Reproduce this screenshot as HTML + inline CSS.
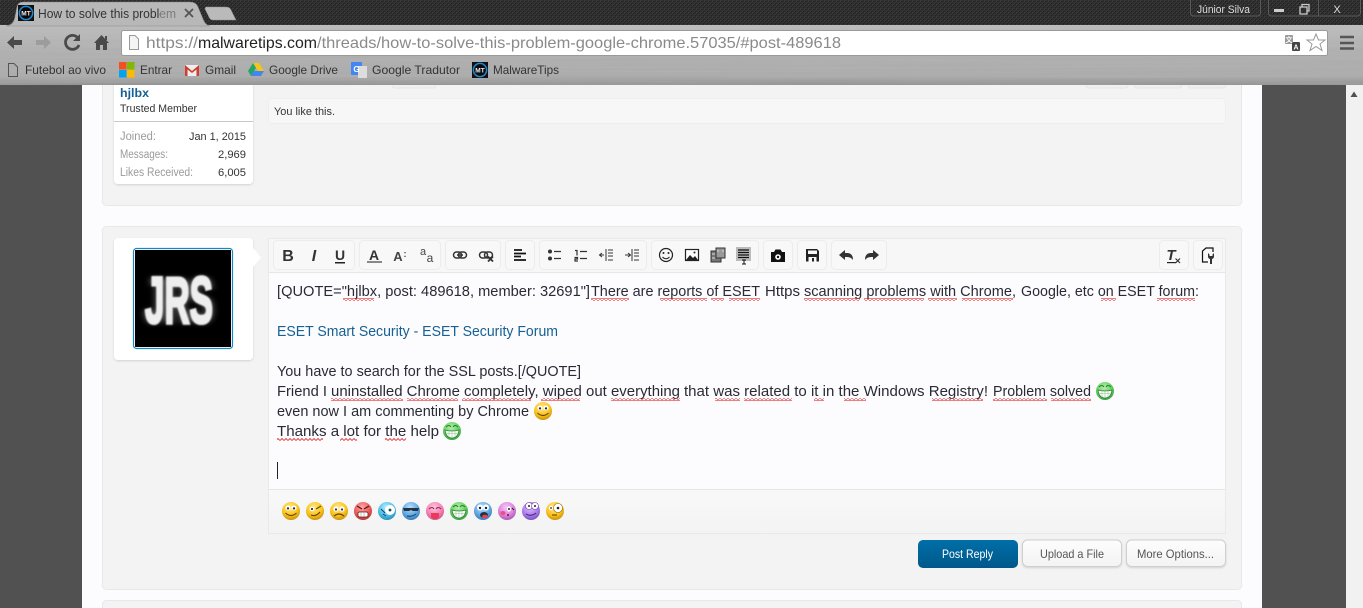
<!DOCTYPE html>
<html><head><meta charset="utf-8"><title>How to solve this problem</title>
<style>html,body{margin:0;padding:0;width:1363px;height:608px;overflow:hidden;background:#515151}svg{display:block}
text{font-family:"Liberation Sans",sans-serif}
.e{font-size:15px;fill:#2a2a35}.b{font-size:12px;fill:#333}.s{font-size:11px;fill:#333}.g{font-size:11.5px;fill:#9a9a9a}</style></head>
<body>
<svg xmlns="http://www.w3.org/2000/svg" width="1363" height="608" viewBox="0 0 1363 608">
<defs>
<pattern id="carbon" width="4" height="4" patternUnits="userSpaceOnUse"><rect width="4" height="4" fill="#2c2c2c"/><rect width="2" height="2" fill="#3a3a3a"/><rect x="2" y="2" width="2" height="2" fill="#363636"/><rect x="1" y="1" width="1" height="1" fill="#1f1f1f"/><rect x="3" y="3" width="1" height="1" fill="#1f1f1f"/></pattern>
<linearGradient id="metal" x1="0" y1="0" x2="0" y2="1"><stop offset="0" stop-color="#bcbcbc"/><stop offset=".45" stop-color="#afafaf"/><stop offset=".85" stop-color="#ababab"/><stop offset="1" stop-color="#939393"/></linearGradient>
<filter id="brush" x="0" y="0" width="100%" height="100%"><feTurbulence type="fractalNoise" baseFrequency="0.004 0.55" numOctaves="2" seed="4"/><feColorMatrix values="0 0 0 0 .55  0 0 0 0 .55  0 0 0 0 .55  0 0 0 .9 -.25"/></filter>
<pattern id="sq" width="4" height="3" patternUnits="userSpaceOnUse"><path d="M0 2.500L2 .5L4 2.500" fill="none" stroke="#e23a3a" stroke-width=".9"/></pattern>
<filter id="bl1" x="-30%" y="-30%" width="160%" height="160%"><feGaussianBlur stdDeviation="4 2.500"/></filter>
<filter id="bl2" x="-10%" y="-10%" width="120%" height="120%"><feGaussianBlur stdDeviation=".7"/></filter>
<filter id="sh" x="-10%" y="-10%" width="120%" height="130%"><feDropShadow dx="0" dy="1" stdDeviation="1" flood-color="#000" flood-opacity=".14"/></filter>
<linearGradient id="post" x1="0" y1="0" x2="0" y2="1"><stop offset="0" stop-color="#006fa8"/><stop offset="1" stop-color="#00588a"/></linearGradient>
<linearGradient id="btn" x1="0" y1="0" x2="0" y2="1"><stop offset="0" stop-color="#fdfdfd"/><stop offset="1" stop-color="#f3f3f3"/></linearGradient>
<linearGradient id="barg" x1="0" y1="0" x2="0" y2="1"><stop offset="0" stop-color="#f9f9f9"/><stop offset="1" stop-color="#f3f3f3"/></linearGradient>
<radialGradient id="y" cx=".45" cy=".3" r=".8"><stop offset="0" stop-color="#ffe88a"/><stop offset=".55" stop-color="#fbc41c"/><stop offset="1" stop-color="#b97f08"/></radialGradient>
<radialGradient id="gr" cx=".45" cy=".3" r=".8"><stop offset="0" stop-color="#b5f0ad"/><stop offset=".55" stop-color="#5fcf5b"/><stop offset="1" stop-color="#2c9036"/></radialGradient>
<radialGradient id="r" cx=".45" cy=".3" r=".8"><stop offset="0" stop-color="#ffaaaa"/><stop offset=".55" stop-color="#e85b5b"/><stop offset="1" stop-color="#a82a2a"/></radialGradient>
<radialGradient id="c" cx=".45" cy=".3" r=".8"><stop offset="0" stop-color="#b8f0ff"/><stop offset=".55" stop-color="#4dbfe6"/><stop offset="1" stop-color="#1a80a8"/></radialGradient>
<radialGradient id="bb" cx=".45" cy=".3" r=".8"><stop offset="0" stop-color="#bfe0fa"/><stop offset=".55" stop-color="#60a8e2"/><stop offset="1" stop-color="#2a6cab"/></radialGradient>
<radialGradient id="p" cx=".45" cy=".3" r=".8"><stop offset="0" stop-color="#ffc8e0"/><stop offset=".55" stop-color="#f57fb0"/><stop offset="1" stop-color="#bd4a80"/></radialGradient>
<radialGradient id="m" cx=".45" cy=".3" r=".8"><stop offset="0" stop-color="#f6c8f6"/><stop offset=".55" stop-color="#dc82de"/><stop offset="1" stop-color="#9a4aa6"/></radialGradient>
<radialGradient id="v" cx=".45" cy=".3" r=".8"><stop offset="0" stop-color="#dcc4fa"/><stop offset=".55" stop-color="#ac7ceb"/><stop offset="1" stop-color="#6c42b0"/></radialGradient>
<g id="grin"><circle r="9" fill="url(#gr)"/><path d="M-6-4Q-3-7-1-4M1-4Q3-7 6-4" fill="none" stroke="#2a7a30" stroke-width="1"/><path d="M-7-1Q0 1 7-1Q6 7 0 7Q-6 7-7-1Z" fill="#fff" stroke="#2a7a30" stroke-width=".8"/><path d="M-3-.5V6M0 0V7M3-.5V6M-6 2.500H6" stroke="#8bc48b" stroke-width=".6"/></g>
<g id="smile"><circle r="9" fill="url(#y)"/><ellipse cx="-3" cy="-3" rx="2.600" ry="2.400" fill="#fff"/><ellipse cx="3" cy="-3" rx="2.600" ry="2.400" fill="#fff"/><circle cx="-3" cy="-2.600" r="1.200" fill="#333"/><circle cx="3" cy="-2.600" r="1.200" fill="#333"/><path d="M-5.500 2Q0 7 5.500 2" fill="none" stroke="#6b4700" stroke-width="1.100"/></g>
<g id="mt"><rect width="16" height="16" fill="#111"/><circle cx="8" cy="8" r="6.600" fill="#0a0a0a" stroke="#1e88d2" stroke-width="1.500"/><text x="8" y="10.500" text-anchor="middle" style="font-size:6.500px;font-weight:bold;fill:#eee">MT</text></g>
</defs>

<!-- page -->
<rect width="1363" height="608" fill="#515151"/>
<rect x="82" y="85" width="1180" height="523" fill="#fcfcff"/>
<rect x="1346" y="85" width="17" height="523" fill="#f1f1f1"/>
<path d="M1350.500 97L1354 91.500L1357.500 97Z" fill="#505050"/>

<!-- first panel -->
<rect x="102.500" y="70" width="1139" height="135.500" rx="4" fill="#f3f3f3" stroke="#e8e8e8"/>
<rect x="392" y="80" width="44" height="8" rx="3" fill="#f0f0f0" stroke="#e6e6e6"/>
<rect x="1086" y="80" width="42" height="8" rx="3" fill="#f0f0f0" stroke="#e6e6e6"/>
<rect x="1134" y="80" width="48" height="8" rx="3" fill="#f0f0f0" stroke="#e6e6e6"/>
<rect x="1188" y="80" width="38" height="8" rx="3" fill="#f0f0f0" stroke="#e6e6e6"/>
<path d="M114 70H253V180a4 4 0 0 1-4 4H118a4 4 0 0 1-4-4Z" fill="#fff" filter="url(#sh)"/>
<text x="120" y="97" style="font-size:12px;font-weight:bold;fill:#176093" textLength="29" lengthAdjust="spacingAndGlyphs">hjlbx</text>
<text x="120" y="112" class="s" textLength="77" lengthAdjust="spacingAndGlyphs">Trusted Member</text>
<rect x="114" y="121" width="139" height="1" fill="#c8c8c8"/>
<text x="120" y="140" class="g" textLength="36" lengthAdjust="spacingAndGlyphs">Joined:</text>
<text x="120" y="158" class="g" textLength="48" lengthAdjust="spacingAndGlyphs">Messages:</text>
<text x="120" y="176" class="g" textLength="73" lengthAdjust="spacingAndGlyphs">Likes Received:</text>
<text x="189" y="140" class="s" textLength="57" lengthAdjust="spacingAndGlyphs">Jan 1, 2015</text>
<text x="218" y="158" class="s" textLength="28" lengthAdjust="spacingAndGlyphs">2,969</text>
<text x="218" y="176" class="s" textLength="28" lengthAdjust="spacingAndGlyphs">6,005</text>
<rect x="268.500" y="98.500" width="957" height="25" rx="4" fill="#f7f7f7" stroke="#eeeeee"/>
<text x="274" y="115" class="s" textLength="61" lengthAdjust="spacingAndGlyphs">You like this.</text>

<!-- second panel -->
<rect x="102.500" y="226.500" width="1139" height="363" rx="4" fill="#f3f3f3" stroke="#e8e8e8"/>
<rect x="102.500" y="600.500" width="1139" height="20" rx="4" fill="#f3f3f3" stroke="#e8e8e8"/>
<rect x="114" y="238" width="139" height="122" rx="4" fill="#fff" filter="url(#sh)"/>
<path d="M253 248L261 257.500L253 267Z" fill="#fff"/>
<rect x="133.500" y="248.500" width="99" height="100" rx="3" fill="#fff" stroke="#1a87c4" stroke-width="1.200"/>
<rect x="135" y="250" width="96" height="97" fill="#000"/>
<text x="145" y="323" filter="url(#bl1)" style="font-size:66px;font-weight:bold;fill:#999" textLength="68" lengthAdjust="spacingAndGlyphs">JRS</text>
<text x="145" y="323" filter="url(#bl2)" style="font-size:66px;font-weight:bold;fill:#eee;stroke:#eee;stroke-width:3" textLength="68" lengthAdjust="spacingAndGlyphs">JRS</text>

<!-- editor -->
<rect x="268.500" y="238.500" width="957" height="295" fill="#fcfcff" stroke="#e9e9e9"/>
<rect x="269" y="239" width="956" height="33" fill="#f7f7f7"/>
<rect x="269" y="272" width="956" height="1" fill="#e6e6e6"/>
<rect x="269" y="489" width="956" height="44" fill="url(#barg)"/>
<rect x="269" y="489" width="956" height="1" fill="#e6e6e6"/>
<g fill="#f8f8f8" stroke="#ececec">
<rect x="273.500" y="240.500" width="81" height="29" rx="4"/><rect x="359.500" y="240.500" width="81" height="29" rx="4"/><rect x="445.500" y="240.500" width="55" height="29" rx="4"/><rect x="505.500" y="240.500" width="29" height="29" rx="4"/><rect x="539.500" y="240.500" width="107" height="29" rx="4"/><rect x="651.500" y="240.500" width="107" height="29" rx="4"/><rect x="763.500" y="240.500" width="29" height="29" rx="4"/><rect x="797.500" y="240.500" width="29" height="29" rx="4"/><rect x="831.500" y="240.500" width="55" height="29" rx="4"/><rect x="1159.500" y="240.500" width="29" height="29" rx="4"/><rect x="1193.500" y="240.500" width="29" height="29" rx="4"/>
</g>
<!-- toolbar icons -->
<text x="288" y="261" text-anchor="middle" style="font-size:16px;font-weight:bold;fill:#333">B</text>
<text x="314" y="261" text-anchor="middle" style="font-size:16px;font-weight:bold;font-style:italic;fill:#333">I</text>
<text x="340" y="260" text-anchor="middle" style="font-size:14px;font-weight:bold;fill:#333">U</text>
<rect x="335" y="262" width="10" height="1.500" fill="#222"/>
<text x="374" y="260" text-anchor="middle" style="font-size:14px;font-weight:bold;fill:#333">A</text>
<rect x="367" y="261" width="15" height="2" fill="#888"/>
<text x="398" y="261" text-anchor="middle" style="font-size:13px;font-weight:bold;fill:#444">A</text>
<text x="405" y="257" text-anchor="middle" style="font-size:9px;font-weight:bold;fill:#444">:</text>
<text x="423" y="255" text-anchor="middle" style="font-size:11px;fill:#444">a</text>
<text x="430" y="262" text-anchor="middle" style="font-size:12px;fill:#444">a</text>
<g fill="none" stroke="#333" stroke-width="1.500"><rect x="453.500" y="252" width="8" height="6" rx="3"/><rect x="458.500" y="252" width="8" height="6" rx="3"/><path d="M457 255H463"/>
<rect x="479.500" y="252" width="8" height="6" rx="3"/><rect x="484.500" y="252" width="8" height="6" rx="3"/></g>
<path d="M488 256.500L493 261.500M493 256.500L488 261.500" stroke="#333" stroke-width="1.800"/>
<path d="M514 250H522M514 253.500H526M514 256.500H521M514 260H526" stroke="#111" stroke-width="1.800"/>
<g fill="#333"><circle cx="550" cy="251.500" r="2"/><circle cx="550" cy="258.500" r="2"/></g>
<path d="M554 251.500H561M554 258.500H561M575 250.500H577V255.500M574.500 257.500H577.500V259H575V261H578M580 251.500H587M580 258.500H587" fill="none" stroke="#333" stroke-width="1.200"/>
<path d="M606 249V261M608 250H613M608 253H613M608 256H613M608 260H613M599 255H604M602 253L599.500 255L602 257M632 249V261M634 250H639M634 253H639M634 256H639M634 260H639M625 255H630M628 253L630.500 255L628 257" fill="none" stroke="#333" stroke-width="1"/>
<circle cx="666" cy="255" r="6.500" fill="none" stroke="#222" stroke-width="1.200"/><circle cx="663.500" cy="253" r="1" fill="#222"/><circle cx="668.500" cy="253" r="1" fill="#222"/><path d="M662.500 257Q666 260.500 669.500 257" fill="none" stroke="#222"/>
<rect x="685.500" y="249.500" width="13" height="11" fill="#fff" stroke="#222" stroke-width="1.200"/><path d="M686 260L690 255L693 258L695 256L698 260Z" fill="#222"/><circle cx="694.500" cy="252.500" r="1" fill="#222"/>
<rect x="711" y="251" width="10" height="11" fill="#777" stroke="#333"/><rect x="716" y="248" width="9" height="10" fill="#999" stroke="#333"/><path d="M712 254h3M712 258h3M717 251h2M722 251h2" stroke="#ddd"/>
<rect x="736" y="247" width="15" height="14" fill="#bbb"/><path d="M738 250H749M738 252.500H749M738 255H749M738 257.500H749" stroke="#111" stroke-width="1.200"/><path d="M742 260H746M744 260V264M742 264H746" stroke="#111"/>
<path d="M771 252H774L775.500 249.500H780.500L782 252H785V262H771Z" fill="#111"/><circle cx="778" cy="257" r="2.800" fill="#fff"/><circle cx="778" cy="257" r="1.200" fill="#111"/>
<path d="M806 249H817L819 251V261.500H806Z" fill="#222"/><rect x="808" y="250.500" width="9" height="3.500" fill="#f8f8f8"/><rect x="808.500" y="257" width="8" height="4.500" fill="#f8f8f8"/><rect x="812" y="258" width="2" height="3.500" fill="#222"/>
<path d="M839 255L845 250V253H847Q853 253 853 260Q851 257 847 257H845V260Z" fill="#333"/>
<path d="M879 255L873 250V253H871Q865 253 865 260Q867 257 871 257H873V260Z" fill="#333"/>
<text x="1171" y="260" text-anchor="middle" style="font-size:15px;font-weight:bold;font-style:italic;fill:#333">T</text>
<rect x="1167" y="262" width="9" height="1.200" fill="#222"/>
<path d="M1175.500 258.500L1180 263M1180 258.500L1175.500 263" stroke="#333" stroke-width="1.200"/>
<path d="M1208 262H1202.500V251L1206 248H1213V252" fill="none" stroke="#111" stroke-width="1.200"/>
<path d="M1208 253V256.500Q1208 258.500 1210 259V264H1212V259Q1214 258.500 1214 256.500V253L1212.500 254.500V256H1209.500V254.500Z" fill="#333"/>

<!-- editor text -->
<text x="277" y="296" class="e" textLength="313" lengthAdjust="spacingAndGlyphs">[QUOTE="hjlbx, post: 489618, member: 32691"]</text>
<text x="591" y="296" class="e" textLength="169" lengthAdjust="spacingAndGlyphs">There are reports of ESET</text>
<text x="765" y="296" class="e" textLength="35" lengthAdjust="spacingAndGlyphs">Https</text>
<text x="804" y="296" class="e" textLength="212" lengthAdjust="spacingAndGlyphs">scanning problems with Chrome,</text>
<text x="1021" y="296" class="e" textLength="178" lengthAdjust="spacingAndGlyphs">Google, etc on ESET forum:</text>
<text x="277" y="336" style="font-size:15px;fill:#176093" textLength="281" lengthAdjust="spacingAndGlyphs">ESET Smart Security - ESET Security Forum</text>
<text x="277" y="376" class="e" textLength="304" lengthAdjust="spacingAndGlyphs">You have to search for the SSL posts.[/QUOTE]</text>
<text x="277" y="396" class="e" textLength="50" lengthAdjust="spacingAndGlyphs">Friend I</text>
<text x="331" y="396" class="e" textLength="349" lengthAdjust="spacingAndGlyphs">uninstalled Chrome completely, wiped out everything</text>
<text x="684" y="396" class="e" textLength="304" lengthAdjust="spacingAndGlyphs">that was related to it in the Windows Registry!</text>
<text x="993" y="396" class="e" textLength="98" lengthAdjust="spacingAndGlyphs">Problem solved</text>
<text x="277" y="416" class="e" textLength="252" lengthAdjust="spacingAndGlyphs">even now I am commenting by Chrome</text>
<text x="277" y="436" class="e" textLength="162" lengthAdjust="spacingAndGlyphs">Thanks a lot for the help</text>
<rect x="277" y="462" width="1" height="17" fill="#222"/>
<g fill="url(#sq)">
<rect x="343" y="298" width="31" height="3"/><rect x="591" y="298" width="38" height="3"/><rect x="660" y="298" width="47" height="3"/><rect x="711" y="298" width="13" height="3"/><rect x="729" y="298" width="31" height="3"/><rect x="804" y="298" width="56" height="3"/><rect x="864" y="298" width="60" height="3"/><rect x="928" y="298" width="29" height="3"/><rect x="962" y="298" width="51" height="3"/><rect x="1101" y="298" width="15" height="3"/><rect x="1157" y="298" width="38" height="3"/>
<rect x="331" y="398" width="72" height="3"/><rect x="407" y="398" width="51" height="3"/><rect x="462" y="398" width="69" height="3"/><rect x="541" y="398" width="39" height="3"/><rect x="611" y="398" width="69" height="3"/><rect x="715" y="398" width="25" height="3"/><rect x="744" y="398" width="48" height="3"/><rect x="814" y="398" width="10" height="3"/><rect x="844" y="398" width="22" height="3"/><rect x="932" y="398" width="51" height="3"/><rect x="993" y="398" width="54" height="3"/><rect x="1051" y="398" width="40" height="3"/>
<rect x="277" y="438" width="46" height="3"/><rect x="340" y="438" width="17" height="3"/><rect x="385" y="438" width="21" height="3"/>
</g>
<use href="#grin" x="1105" y="391"/><use href="#smile" x="543" y="411"/><use href="#grin" x="452" y="431"/>

<!-- smilies -->
<use href="#smile" x="291" y="511"/>
<g transform="translate(315 511)"><circle r="9" fill="url(#y)"/><ellipse cx="-3" cy="-2" rx="2.400" ry="2.200" fill="#fff"/><circle cx="-3" cy="-2" r="1.100" fill="#333"/><path d="M1-2L6-5M-4 4Q1 6 5 1" fill="none" stroke="#6b4700" stroke-width="1.200"/></g>
<g transform="translate(339 511)"><circle r="9" fill="url(#y)"/><ellipse cx="-3" cy="-2" rx="2.600" ry="2.600" fill="#fff"/><ellipse cx="3" cy="-2" rx="2.600" ry="2.600" fill="#fff"/><circle cx="-3" cy="-1.500" r="1.100" fill="#333"/><circle cx="3" cy="-1.500" r="1.100" fill="#333"/><path d="M-5 5Q0 1 5 5" fill="none" stroke="#6b4700" stroke-width="1.200"/></g>
<g transform="translate(363 511)"><circle r="9" fill="url(#r)"/><path d="M-6-5L-1-2M6-5L1-2" stroke="#611" stroke-width="1.300"/><rect x="-5" y="1" width="10" height="5" rx="1.500" fill="#fff" stroke="#611" stroke-width=".7"/><path d="M-2 1V6M1 1V6" stroke="#999" stroke-width=".6"/></g>
<g transform="translate(387 511)"><circle r="9" fill="url(#c)"/><ellipse cx="3" cy="-1" rx="5" ry="5" fill="#fff"/><circle cx="3" cy="-1" r="1.400" fill="#246"/><path d="M-6-2L-2 2M-4 3L-1 5" stroke="#146" stroke-width="1"/></g>
<g transform="translate(411 511)"><circle r="9" fill="url(#bb)"/><path d="M-8-3H8L7 0H2L0-1L-2 0H-7Z" fill="#234"/><path d="M-4 5Q1 6 5 3" fill="none" stroke="#146" stroke-width="1"/></g>
<g transform="translate(435 511)"><circle r="9" fill="url(#p)"/><path d="M-6-2Q-3-5-1-2M1-2Q3-5 6-2" fill="none" stroke="#8a2a55" stroke-width="1.100"/><path d="M-4 2H4V5Q4 8 0 8Q-4 8-4 5Z" fill="#e83a5a"/></g>
<use href="#grin" x="459" y="511"/>
<g transform="translate(483 511)"><circle r="9" fill="url(#bb)"/><circle cx="-3" cy="-3.500" r="3" fill="#fff"/><circle cx="3" cy="-3.500" r="3" fill="#fff"/><circle cx="-3" cy="-3" r="1.200" fill="#123"/><circle cx="3" cy="-3" r="1.200" fill="#123"/><ellipse cx="1" cy="4" rx="4" ry="3" fill="#234"/><ellipse cx="2" cy="5.500" rx="3" ry="1.800" fill="#e8405a"/></g>
<g transform="translate(507 511)"><circle r="9" fill="url(#m)"/><ellipse cx="-4" cy="2" rx="2.500" ry="2" fill="#f34a80"/><ellipse cx="2" cy="-2" rx="2" ry="2.600" fill="#fff"/><circle cx="2" cy="-2" r="1" fill="#222"/><path d="M5-3L7-1" stroke="#222"/><circle cx="1" cy="4" r="1" fill="#622"/></g>
<g transform="translate(531 511)"><circle r="9" fill="url(#v)"/><circle cx="-2" cy="-5" r="3.500" fill="#fff" stroke="#63a" stroke-width=".6"/><circle cx="4" cy="-5" r="3.500" fill="#fff" stroke="#63a" stroke-width=".6"/><circle cx="-2" cy="-5" r="1" fill="#222"/><circle cx="4" cy="-5" r="1" fill="#222"/><path d="M-5 3Q0 6 5 2" fill="none" stroke="#42217a" stroke-width="1"/></g>
<g transform="translate(555 511)"><circle r="9" fill="url(#y)"/><circle cx="3" cy="-3" r="4.500" fill="#fff" stroke="#8a6000" stroke-width=".6"/><circle cx="-4" cy="-3" r="2.200" fill="#fff"/><circle cx="3" cy="-3" r="1.300" fill="#222"/><circle cx="-4" cy="-3" r=".9" fill="#222"/><path d="M-3 4H2" stroke="#6b4700" stroke-width="1.100"/></g>

<!-- buttons -->
<rect x="918" y="540" width="100" height="28" rx="5" fill="url(#post)"/>
<text x="942" y="558" style="font-size:12px;fill:#fff" textLength="51" lengthAdjust="spacingAndGlyphs">Post Reply</text>
<rect x="1022.500" y="540" width="99" height="26.500" rx="5" fill="url(#btn)" stroke="#cfcfcf" filter="url(#sh)"/>
<text x="1040" y="558" style="font-size:12px;fill:#555" textLength="64" lengthAdjust="spacingAndGlyphs">Upload a File</text>
<rect x="1126.500" y="540" width="99" height="26.500" rx="5" fill="url(#btn)" stroke="#cfcfcf" filter="url(#sh)"/>
<text x="1137" y="558" style="font-size:12px;fill:#555" textLength="77" lengthAdjust="spacingAndGlyphs">More Options...</text>

<!-- chrome frame -->
<rect width="1363" height="25" fill="url(#carbon)"/>
<rect y="25" width="1363" height="60" fill="url(#metal)"/>
<rect y="25" width="1363" height="60" filter="url(#brush)" opacity=".4"/>
<path d="M206 7H226Q230 7 231 10L236 20H213Q210 20 209 17L205 9Q205 7 206 7Z" fill="#bababa" stroke="#888" stroke-width=".5"/>
<path d="M6 26C12 25 14 22 15 17L17 7Q18 2 23 2H190Q196 2 198 7L203 19Q205 25 210 26Z" fill="#b8b8b8" stroke="#8a8a8a" stroke-width=".6"/>
<use href="#mt" x="18" y="5"/>
<text x="38" y="18" style="font-size:12.500px;fill:#333" textLength="138" lengthAdjust="spacingAndGlyphs">How to solve this problem</text>
<rect x="160" y="8" width="18" height="14" fill="#b8b8b8" opacity=".55"/>
<path d="M185 9L193 17M193 9L185 17" stroke="#555" stroke-width="1.800"/>

<rect x="1190.500" y="-3" width="70" height="19" rx="3" fill="none" stroke="#5a5a5a"/>
<text x="1197" y="13" style="font-size:11px;fill:#ddd" textLength="53" lengthAdjust="spacingAndGlyphs">Júnior Silva</text>
<rect x="1268.500" y="-3" width="92" height="19" rx="3" fill="none" stroke="#5a5a5a"/>
<path d="M1318.500 0V16" stroke="#5a5a5a"/>
<rect x="1274" y="9" width="10" height="3" fill="#ccc"/>
<path d="M1300 7H1307V14H1300ZM1302 7V4.500H1309V11H1307" fill="none" stroke="#ccc" stroke-width="1.300"/>
<text x="1337" y="13" text-anchor="middle" style="font-size:11px;fill:#ddd">X</text>

<path d="M7 42.500L14 36V40H22V45H14V49Z" fill="#4a4a4a"/>
<path d="M51 42.500L44 36V40H36V45H44V49Z" fill="#9c9c9c"/>
<path d="M78 38A7 7 0 1 0 79 45" fill="none" stroke="#4a4a4a" stroke-width="2.800"/><path d="M73 41H80V34Z" fill="#4a4a4a"/>
<path d="M94 43L101.500 35L109 43H107V50H103V45H100V50H96V43Z" fill="#4a4a4a"/><rect x="105" y="36" width="2" height="4" fill="#4a4a4a"/>

<rect x="121.500" y="30.500" width="1206" height="25" rx="2" fill="#fff" stroke="#9a9a9a"/>
<path d="M129.500 35.500H135L138.500 39V49.500H129.500Z" fill="#f4f4f4" stroke="#999"/>
<text x="146" y="48" style="font-size:16px;fill:#8a8a8a" textLength="52" lengthAdjust="spacingAndGlyphs">https://</text>
<text x="198" y="48" style="font-size:16px;fill:#222" textLength="119" lengthAdjust="spacingAndGlyphs">malwaretips.com</text>
<text x="317" y="48" style="font-size:16px;fill:#8a8a8a" textLength="524" lengthAdjust="spacingAndGlyphs">/threads/how-to-solve-this-problem-google-chrome.57035/#post-489618</text>
<rect x="1285" y="35" width="8" height="9" rx="1" fill="#999"/><rect x="1292" y="42" width="8" height="9" rx="1" fill="#444"/>
<text x="1289" y="42" text-anchor="middle" style="font-size:7px;font-weight:bold;fill:#fff">文</text>
<text x="1296" y="49.500" text-anchor="middle" style="font-size:7px;font-weight:bold;fill:#fff">A</text>
<path d="M1316 34L1318.500 40H1325L1320 44L1322 50.500L1316 46.500L1310 50.500L1312 44L1307 40H1313.500Z" fill="#fff" stroke="#999"/>
<path d="M1340 37H1354M1340 43H1354M1340 48.500H1354" stroke="#555" stroke-width="2.600"/>

<path d="M8.500 63.500H14L17.500 67V76.500H8.500Z" fill="none" stroke="#555"/>
<text x="25" y="74" class="b" textLength="81" lengthAdjust="spacingAndGlyphs">Futebol ao vivo</text>
<rect x="119" y="62" width="7.500" height="7.500" fill="#f25022"/><rect x="127" y="62" width="7.500" height="7.500" fill="#7fba00"/><rect x="119" y="70" width="7.500" height="7.500" fill="#00a4ef"/><rect x="127" y="70" width="7.500" height="7.500" fill="#ffb900"/>
<text x="140" y="74" class="b" textLength="32" lengthAdjust="spacingAndGlyphs">Entrar</text>
<rect x="185" y="65" width="14" height="11" fill="#eee"/><path d="M185 76V65L192 71L199 65V76H196.500V69.500L192 73L187.500 69.500V76Z" fill="#d23c30"/>
<text x="205" y="74" class="b" textLength="31" lengthAdjust="spacingAndGlyphs">Gmail</text>
<path d="M253 63H259L264 71H258Z" fill="#f5c518"/><path d="M253 63L248 71L251 76L256 68Z" fill="#23a566"/><path d="M251 76H261L264 71H254Z" fill="#4285f4"/>
<text x="269" y="74" class="b" textLength="69" lengthAdjust="spacingAndGlyphs">Google Drive</text>
<rect x="351" y="62" width="11" height="13" rx="1" fill="#4285f4"/><rect x="358" y="66" width="9" height="12" fill="#ddd"/><text x="356.500" y="72" text-anchor="middle" style="font-size:8px;font-weight:bold;fill:#fff">G</text>
<text x="372" y="74" class="b" textLength="88" lengthAdjust="spacingAndGlyphs">Google Tradutor</text>
<use href="#mt" x="472" y="62"/>
<text x="493" y="74" class="b" textLength="66" lengthAdjust="spacingAndGlyphs">MalwareTips</text>
</svg>
</body></html>
